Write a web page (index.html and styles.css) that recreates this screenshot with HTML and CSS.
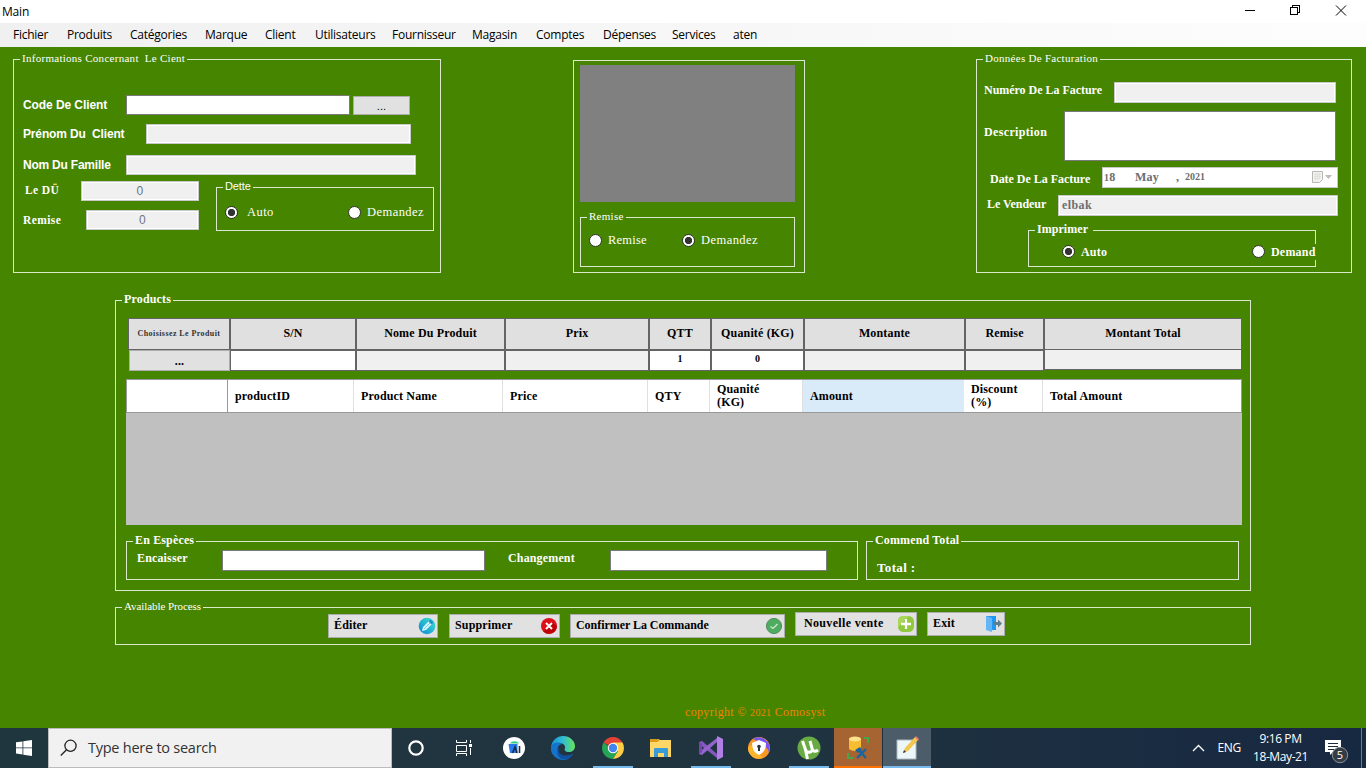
FILE: index.html
```html
<!DOCTYPE html>
<html lang="fr">
<head>
<meta charset="utf-8">
<title>Main</title>
<link rel="stylesheet" href="styles.css">
</head>
<body>
<header class="titlebar"><span>Main</span>
<svg class="winctl" width="110" height="20" fill="none" stroke="#000" shape-rendering="crispEdges"><path d="M5 10.500h10M50.500 7.500h7v7h-7zM52.500 7.500v-2h7v7h-2"/><path d="M96 5.500l10 10M106 5.500l-10 10" shape-rendering="auto"/></svg></header>
<nav class="menu"><span>Fichier</span><span>Produits</span><span>Catégories</span><span>Marque</span><span>Client</span><span>Utilisateurs</span><span>Fournisseur</span><span>Magasin</span><span>Comptes</span><span>Dépenses</span><span>Services</span><span>aten</span></nav>
<main>
<div class="top">
  <section class="group client">
    <h2 class="cap light">Informations Concernant&nbsp; Le Cient</h2>
    <div class="row code"><label class="sans">Code De Client</label><div class="field on"></div><button class="dots">...</button></div>
    <div class="row prenom"><label class="sans">Prénom Du&nbsp; Client</label><div class="field"></div></div>
    <div class="row nom"><label class="sans">Nom Du Famille</label><div class="field"></div></div>
    <div class="debt">
      <div class="amounts">
        <div class="row du"><label>Le DÜ</label><div class="field num">0</div></div>
        <div class="row rem"><label>Remise</label><div class="field num">0</div></div>
      </div>
      <section class="group dette"><h3 class="cap arial">Dette</h3>
        <div class="row radios"><i class="radio sel"></i><span class="a">Auto</span><i class="radio"></i><span class="b">Demandez</span></div>
      </section>
    </div>
  </section>
  <section class="group photo">
    <div class="picture"></div>
    <section class="group remise"><h3 class="cap light">Remise</h3>
      <div class="row radios"><i class="radio"></i><span class="a">Remise</span><i class="radio sel"></i><span class="b">Demandez</span></div>
    </section>
  </section>
  <section class="group invoice">
    <h2 class="cap light">Données De Facturation</h2>
    <div class="row numero"><label>Numéro De La Facture</label><div class="field"></div></div>
    <div class="row desc"><label>Description</label><div class="field on"></div></div>
    <div class="row date"><label>Date De La Facture</label><div class="field picker"><span class="d"><small>1</small>8</span><span class="m">May</span><span class="c">,</span><small class="y">2021</small>
      <svg width="22" height="14"><path d="M1.500 1.500h10v8l-3 3h-7z" fill="#f2f2f0" stroke="#b8b8b4"/><path d="M3 4.500h7M3 6.500h7M3 8.500h6M4.500 3v7M6.500 3v7M8.500 3v6" stroke="#e0e0dc"/><path d="M14 5h7l-3.500 4z" fill="#bdbdb4"/></svg></div></div>
    <div class="row vendeur"><label>Le Vendeur</label><div class="field">elbak</div></div>
    <section class="group print"><h3 class="cap">Imprimer</h3>
      <div class="row radios"><i class="radio sel"></i><span class="a">Auto</span><i class="radio"></i><span class="b">Demand</span></div>
    </section>
  </section>
</div>
<section class="group products">
  <h2 class="cap">Products</h2>
  <div class="entry">
    <div class="hd tiny">Choisissez Le Produit</div><div class="hd">S/N</div><div class="hd">Nome Du Produit</div><div class="hd">Prix</div><div class="hd">QTT</div><div class="hd">Quanité (KG)</div><div class="hd">Montante</div><div class="hd">Remise</div><div class="hd">Montant Total</div>
    <button class="pick">...</button><div class="in on"></div><div class="in"></div><div class="in"></div><div class="in on">1</div><div class="in on">0</div><div class="in"></div><div class="in"></div><div class="in last"></div>
  </div>
  <div class="table">
    <div class="thead"><span></span><span>productID</span><span>Product Name</span><span>Price</span><span>QTY</span><span>Quanité (KG)</span><span class="hot">Amount</span><span>Discount (%)</span><span>Total Amount</span></div>
  </div>
  <div class="pay">
    <section class="group cash"><h3 class="cap">En Espèces</h3>
      <div class="row"><label>Encaisser</label><div class="field on first"></div><label class="chg">Changement</label><div class="field on second"></div></div>
    </section>
    <section class="group total"><h3 class="cap">Commend Total</h3><strong>Total :</strong></section>
  </div>
</section>
<section class="group process">
  <h2 class="cap light">Available Process</h2>
  <div class="actions">
    <button class="edit"><span>Éditer</span><svg width="18" height="18"><defs><linearGradient id="ed" x1="0" y1="1" x2="1" y2="0"><stop stop-color="#0786d8"/><stop offset="1" stop-color="#45e5c8"/></linearGradient></defs><circle cx="9" cy="9" r="8.300" fill="url(#ed)"/><path d="M4 14l1-4 6-6 3 3-6 6z" fill="#d9f6ff"/><path d="M10.500 4.500l3 3 2-2-3-3z" fill="#1692c4"/><path d="M6 12l6-6" stroke="#72c9ed"/></svg></button>
    <button class="del"><span>Supprimer</span><svg width="18" height="18"><circle cx="9" cy="9" r="8" fill="#df1019"/><path d="M3.500 14.500A8 8 0 0 0 17 9l-5-4z" fill="#bd0008"/><path d="M6 6l6 6M12 6l-6 6" stroke="#fff" stroke-width="2"/></svg></button>
    <button class="conf"><span>Confirmer La Commande</span><svg width="18" height="18"><circle cx="9" cy="9" r="7.600" fill="#4eac61" stroke="#558d60"/><path d="M5.500 9.500l2.500 2 4.500-4.500" fill="none" stroke="#d7ead9" stroke-width="1.200"/></svg></button>
    <button class="new up"><span>Nouvelle vente</span><svg width="18" height="18"><rect x="1" y="1" width="16" height="16" rx="5.500" fill="#91c83e"/><path d="M1 12V6q0-5 5-5h6z" fill="#a9d75d"/><path d="M9 4v10M4 9h10" stroke="#fff" stroke-width="2.300"/></svg></button>
    <button class="exit up"><span>Exit</span><svg width="18" height="18"><path d="M1 1h10v14H1z" fill="#2196f3"/><path d="M1 1l6 2v14l-6-2z" fill="#64b5f6"/><path d="M8.500 7H13V4.500L17 8.500l-4 4V10H8.500z" fill="#607d8b"/></svg></button>
  </div>
</section>
<p class="copy">copyright © <small>2021</small> Comosyst</p>
</main>
<footer class="taskbar">
  <div class="start"><svg width="16" height="16" fill="#fff"><path d="M0 2.300l6.500-.9v6.100H0zM7.300 1.300L16 0v7.500H7.300zM0 8.300h6.500v6.200L0 13.600zM7.300 8.300H16V16l-8.700-1.300z"/></svg></div>
  <div class="search"><svg width="18" height="18" fill="none" stroke="#222" stroke-width="1.300"><circle cx="10.500" cy="6.800" r="5.600"/><path d="M6.500 10.800L.8 16.500"/></svg><span>Type here to search</span></div>
  <div class="tile"><svg width="24" height="24"><circle cx="12" cy="12" r="6.700" fill="none" stroke="#fff" stroke-width="2.200"/></svg></div>
  <div class="tile"><svg width="24" height="24" fill="none" stroke="#fff"><path d="M3.500 4v2.500h10V4M3.500 9.500h10v6h-10zM3.500 20v-2.500h10V20M17.500 4v3M17.500 12v7"/><path d="M16 8h3v3h-3z" fill="#fff" stroke="none"/></svg></div>
  <div class="tile"><svg width="24" height="24"><circle cx="12" cy="12" r="11" fill="#fff"/><path d="M6.500 8h9v9H8z" fill="#2979ed"/><path d="M8 7.500a5 4 0 0 1 9 0z" fill="#2fcf83"/><path d="M10.500 17l2.500-6 2 6M17.500 10v7" fill="none" stroke="#16304b" stroke-width="1.600"/></svg></div>
  <div class="tile"><svg width="24" height="24"><defs><linearGradient id="eg"><stop stop-color="#1593d5"/><stop offset=".5" stop-color="#30bed3"/><stop offset="1" stop-color="#68e35b"/></linearGradient></defs><path d="M0 11C1 4 6 0 12 0c7 0 12 5 12 10 0 4-3 6-6 6-4 0-5-2-4-4 1-5-8-8-14-1z" fill="url(#eg)"/><path d="M0 11c1-4 7-6 11-3-4 1-5 4-4 7 1 4 7 7 15 3-3 5-7 6-10 6C5 24-1 18 0 11z" fill="#1574c9"/><path d="M8 11c-2 7 4 11 14 7-3 5-8 6-11 5-5-2-6-8-3-12z" fill="#1150a1"/></svg></div>
  <div class="tile open"><svg width="24" height="24"><path d="M12 12L2.500 6.500A11 11 0 0 1 21.500 6.500z" fill="#e34133"/><path d="M12 12H10L2.500 6.500A11 11 0 0 0 12 23l5-8z" fill="#25a456"/><path d="M12 12V6.500h9.500A11 11 0 0 1 12 23l5-8z" fill="#ffce44"/><circle cx="12" cy="12" r="5.200" fill="#fff"/><circle cx="12" cy="12" r="4.200" fill="#4384ee"/></svg></div>
  <div class="tile"><svg width="24" height="24"><path d="M1 3h8l2 1h11v17H1z" fill="#ffd767"/><path d="M1 3h8l1 2-2 1H1z" fill="#d99b13"/><path d="M5 21v-8q0-1 1-1h12q1 0 1 1v8h-4v-4H9v4z" fill="#3a9bd9"/></svg></div>
  <div class="tile open"><svg width="24" height="24"><path d="M0 6l3-1 15 13v4L0 8z" fill="#8657c0"/><path d="M0 18l3 1L18 6V2L0 16z" fill="#9364cb"/><path d="M0 6l3 2v8l-3 2z" fill="#7446ae"/><path d="M18 0l6 3v18l-6 3z" fill="#b27ee5"/></svg></div>
  <div class="tile"><svg width="24" height="24"><circle cx="12" cy="12" r="11" fill="#f99724"/><path d="M6 3a11 11 0 0 1 16 13c-3-7-8-9-16-13z" fill="#7855ed"/><path d="M1 12a11 11 0 0 0 15 10L4 9z" fill="#ffb52b"/><path d="M12 4l7 3q0 9-7 12-7-3-7-12z" fill="#fff"/><circle cx="12" cy="10.500" r="1.800" fill="#283440"/><path d="M11 11h2v4h-2z" fill="#283440"/></svg></div>
  <div class="tile open"><svg width="24" height="24"><circle cx="12" cy="12" r="11.500" fill="#68aa43"/><path d="M5.500 5l3.500 10q4 3 6.500-1l-2.500-9M15 13q2 4 6 1M8.500 14l2 9" fill="none" stroke="#fff" stroke-width="3"/></svg></div>
  <div class="tile sql"><svg width="24" height="24"><path d="M3 3v10q5 4 12 0V3z" fill="#f7bd32"/><ellipse cx="9" cy="3" rx="6" ry="2.500" fill="#ffe08a"/><path d="M18 2h4v5M2 17v5h5" fill="none" stroke="#4aa34b" stroke-width="2"/><path d="M12 13l8 9M20 13l-9 9" stroke="#19649e" stroke-width="2.400"/><path d="M9 14l5-3 2 3-4 3z" fill="#19649e"/></svg></div>
  <div class="tile active"><svg width="24" height="24"><path d="M2 4h19v19H2z" fill="#edf7fa" stroke="#a9b7bd"/><path d="M8 17l2-5L20 1l3 3-10 11z" fill="#f4c64e"/><path d="M20 1l1-1 3 3-1 2z" fill="#e7797e"/><path d="M8 17l1-3 2 2z" fill="#333"/></svg></div>
  <div class="tray"><svg class="chev" width="13" height="8" fill="none" stroke="#fff" stroke-width="1.300"><path d="M1 7l5.500-5.500L12 7"/></svg><span class="lang">ENG</span><div class="clock"><span>9:16 PM</span><span>18-May-21</span></div>
  <svg class="notes" width="26" height="26"><path d="M1 1h16v12H9l-3 3v-3H1z" fill="#fff"/><path d="M4 4.500h10M4 7.500h10M4 10.500h6" stroke="#1b2a3c"/><circle cx="16" cy="16" r="7.700" fill="#343c45" stroke="#8b9096"/><text x="16" y="20" text-anchor="middle" class="badge">5</text></svg><i class="peek"></i></div>
</footer>
</body>
</html>
```
FILE: styles.css
```css
* { box-sizing: border-box; }
body { margin: 0; width: 1366px; height: 768px; overflow: hidden; background: #468500; color: #fff; font: bold 12px/16px "Liberation Serif", serif; letter-spacing: .15px; display: flex; flex-direction: column; }
h2, h3, p { margin: 0; font: inherit; }
button { display: flex; align-items: center; padding: 0; margin: 0; background: #e1e1e1; border: 2px solid #adadad; color: #000; font: inherit; letter-spacing: inherit; }
label, span { white-space: nowrap; }
svg { flex: none; }
small { font-size: 10px; }

.titlebar { height: 23px; background: #fff; color: #000; font: 12px/23px "Open Sans", sans-serif; letter-spacing: -.2px; padding-left: 2px; display: flex; justify-content: space-between; }
.winctl { margin-right: 16px; }
.menu { height: 24px; background: linear-gradient(90deg, #f0f0f0, #fdfdfd); color: #000; font: 12px/24px "Open Sans", sans-serif; letter-spacing: -.25px; padding-left: 13px; display: grid; grid-template-columns: 54px 63px 75px 60px 50px 77px 80px 64px 67px 69px 61px 60px; }
main { height: 681px; }

.group { border: 1px solid #dce8cc; }
.cap { width: fit-content; height: 16px; margin: -10px 0 0 6px; padding: 0 2px; background: #468500; white-space: nowrap; }
.light { font-weight: normal; font-size: 11px; letter-spacing: .28px; }
.row { display: flex; }
.row label { flex: none; }
.field { flex: none; background: #f0f0f0; border: 1px solid #c8c8c8; box-shadow: inset 0 0 0 1px #fff; color: #6d6d6d; }
.on { background: #fff; }
.field.on { border-color: #7a7a7a; }
.radio { flex: none; width: 13px; height: 13px; border: 1px solid #333; border-radius: 50%; background: #fff; }
.radio.sel { background: radial-gradient(circle, #333 0 3.300px, #fff 4px); }
.radios { align-items: center; font-weight: normal; font-size: 12.500px; letter-spacing: .45px; }

.top { display: flex; padding: 12px 0 0 13px; height: 226px; }
.client { width: 428px; height: 214px; }
.invoice { width: 376px; height: 214px; margin-left: 171px; }
.photo { width: 232px; height: 213px; margin: 1px 0 0 132px; padding: 4px 6px; }
.sans { font: bold 12px/20px "Liberation Sans", sans-serif; letter-spacing: -.08px; }
.code { margin-top: 29px; padding-left: 9px; }
.code label { width: 103px; }
.code .field { width: 224px; height: 20px; }
.dots { width: 57px; height: 19px; margin: 1px 0 0 3px; border-width: 1px; justify-content: center; font: 11px "Liberation Sans", sans-serif; }
.prenom { margin-top: 9px; padding-left: 9px; }
.prenom label { width: 123px; letter-spacing: -.15px; }
.prenom .field { width: 265px; height: 20px; }
.nom { margin-top: 11px; padding-left: 9px; }
.nom label { width: 103px; letter-spacing: -.22px; }
.nom .field { width: 290px; height: 20px; }
.debt { display: flex; margin-top: 6px; }
.amounts { width: 202px; }
.amounts label { line-height: 19px; font-size: 11.500px; letter-spacing: .4px; }
.du { padding-left: 11px; }
.du label { width: 56px; }
.rem { padding-left: 9px; margin-top: 9px; }
.rem label { width: 63px; line-height: 21px; }
.num { height: 20px; flex: 1; margin-right: 17px; text-align: center; font: 12px/19px "Liberation Sans", sans-serif; color: #6d7480; }
.dette { width: 218px; height: 44px; margin-top: 6px; }
.arial { font: 11px/17px "Liberation Sans", sans-serif; letter-spacing: -.1px; }
.dette .radios { margin: 10px 0 0 8px; }
.dette .a { width: 101px; margin-left: 9px; }
.dette .radio + .b { margin-left: 6px; }
.picture { width: 215px; height: 137px; background: #808080; }
.remise { width: 215px; height: 50px; margin-top: 15px; }
.remise .radios { margin: 8px 0 0 8px; }
.remise .a { width: 74px; margin-left: 6px; letter-spacing: .2px; }
.remise .b { margin-left: 6px; }

.numero { margin-top: 16px; padding-left: 7px; }
.numero label { width: 130px; letter-spacing: -.03px; }
.numero .field { width: 222px; height: 21px; }
.desc { margin-top: 8px; padding-left: 7px; }
.desc label { width: 80px; line-height: 43px; letter-spacing: .35px; }
.desc .field { width: 272px; height: 50px; }
.date { margin-top: 6px; padding-left: 13px; height: 21px; }
.date label { width: 112px; line-height: 25px; letter-spacing: -.03px; }
.picker { width: 236px; height: 21px; background: #fff; display: flex; align-items: center; padding: 0 0 1px 1px; }
.d { width: 31px; } .m { width: 41px; } .c { width: 9px; } .y { width: 126px; letter-spacing: 0; }
.vendeur { margin-top: 7px; padding-left: 10px; }
.vendeur label { width: 71px; line-height: 19px; letter-spacing: -.05px; }
.vendeur .field { width: 280px; height: 21px; line-height: 18px; padding-left: 3px; letter-spacing: .4px; }
.print { width: 288px; height: 37px; margin: 14px 0 0 51px; }
.print .radios { margin: 6px -1px 0 33px; font-weight: bold; font-size: 12px; letter-spacing: .2px; height: 17px; }
.print .cap { padding-right: 5px; letter-spacing: .05px; }
.print .a { width: 171px; margin-left: 6px; }
.print .b { flex: 1; margin-left: 6px; background: #468500; }

.products { width: 1136px; height: 291px; margin: 27px 0 0 115px; }
.entry { display: grid; grid-template-columns: 102px 126px 149px 144px 62px 93px 161px 79px 198px; grid-template-rows: 32px 21px; margin: 11px 0 0 12px; color: #000; text-align: center; }
.hd { background: #e0e0e0; border: 1px solid #646464; line-height: 29px; }
.tiny { font-size: 8px; letter-spacing: .42px; color: #333; }
.in { background: #f0f0f0; border: 1px solid #646464; font-size: 10px; line-height: 15px; }
.in.on { background: #fff; }
.last { height: 20px; border-top-width: 0; }
.pick { justify-content: center; margin-left: 1px; border-width: 1px; }
.table { width: 1116px; height: 146px; margin: 8px 0 0 10px; background: #c0c0c0; }
.thead { height: 34px; display: grid; grid-template-columns: 101px 126px 149px 145px 62px 93px 161px 79px 1fr; background: #fff; border: 1px solid #999; color: #000; line-height: 13px; }
.thead span { display: flex; align-items: center; padding: 0 20px 0 7px; border-right: 1px solid #e0e0e0; white-space: normal; }
.thead span:first-child { border-color: #999; }
.thead span:nth-child(5) { padding-right: 0; }
.thead .hot { background: #d9ebf9; border-color: #d9ebf9; }
.thead span:last-child { border-right: 0; }
.pay { display: flex; padding: 16px 0 0 10px; gap: 8px; }
.cash { width: 732px; height: 39px; }
.cash .row { margin-left: 10px; margin-top: 2px; }
.cash label { width: 85px; line-height: 16px; }
.cash .first { width: 263px; height: 21px; }
.cash .chg { width: 102px; margin-left: 23px; }
.cash .second { width: 217px; height: 21px; }
.total { width: 373px; height: 39px; }
.total strong { display: block; font-size: 13px; margin: 12px 0 0 10px; letter-spacing: .35px; }
.process { width: 1136px; height: 38px; margin: 16px 0 0 115px; }
.process .cap { letter-spacing: -.08px; }
.actions { display: flex; padding-left: 212px; }
.actions button { height: 24px; border-width: 1px; justify-content: space-between; padding: 0 1px 0 5px; }
.actions span { margin-bottom: 2px; }
.actions .up { margin-top: -2px; }
.edit { width: 110px; }
.actions .del { width: 111px; margin-left: 11px; }
.actions .conf { width: 215px; margin-left: 10px; letter-spacing: -.05px; }
.actions .new { width: 122px; margin-left: 10px; padding-left: 8px; letter-spacing: .33px; }
.actions .exit { width: 78px; margin-left: 10px; }
.copy { margin: 59px 0 0 685px; color: #f08200; font-weight: normal; letter-spacing: .33px; }

.taskbar { height: 40px; background: linear-gradient(90deg, #20363f, #203440 55%, #172841); display: flex; font: 12px/18px "Open Sans", sans-serif; letter-spacing: 0; }
.start { width: 48px; display: flex; align-items: center; justify-content: center; }
.search { width: 344px; background: #f1f1f1; border: 1px solid #bbb; color: #333; display: flex; align-items: center; padding-left: 11px; gap: 10px; font-size: 14.500px; letter-spacing: -.25px; }
.tile { width: 48px; margin-right: 1px; display: flex; align-items: center; justify-content: center; }
.open { border-bottom: 2px solid #76b9ed; padding-top: 2px; width: 40px; margin: 0 4px 0 5px; }
.sql { background: #a66433; border-bottom: 2px solid #ff7200; padding-top: 2px; margin-left: 1px; }
.active { background: #4c5c68; border-bottom: 2px solid #76b9ed; padding-top: 2px; }
.tray { margin-left: auto; display: flex; align-items: center; }
.lang { margin: 0 11px 0 12px; letter-spacing: -.3px; }
.clock { display: flex; flex-direction: column; align-items: center; width: 57px; margin-right: 15px; letter-spacing: -.4px; }
.notes { margin-top: 7px; }
.badge { font: 11px "Open Sans", sans-serif; fill: #fff; }
.peek { width: 1px; height: 40px; margin: 0 4px 0 11px; background: #6f7b89; }
```
